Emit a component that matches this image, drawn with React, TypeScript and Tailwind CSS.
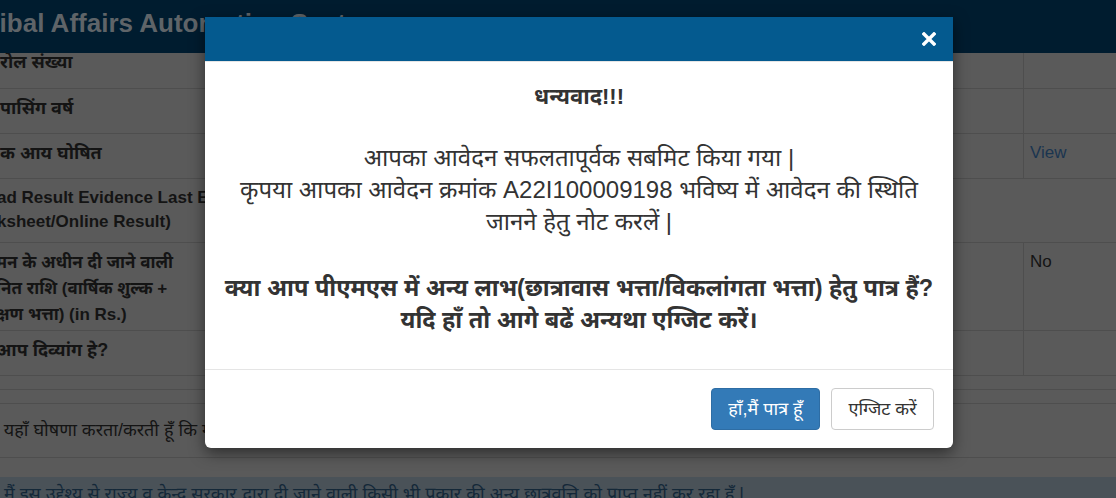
import React from 'react';

const FONT = "font-['Liberation_Sans','Noto_Sans_Devanagari','Noto_Sans',sans-serif]";

const Row: React.FC<{ h: string; label?: React.ReactNode; right?: React.ReactNode; span?: boolean; bold?: boolean }> = ({ h, label, right, span, bold = true }) => (
  <div className={`grid grid-cols-[400px_623px_93px] border-b border-[#4e4e4e] ${h}`}>
    <div className={`pt-[7px] pl-0 text-[17px] leading-[24px] text-[#141414] ${bold ? 'font-bold' : ''}`}>{label}</div>
    {span ? (
      <div className="col-span-2" />
    ) : (
      <>
        <div />
        <div className="border-l border-[#4e4e4e] pt-[7px] pl-[6px] text-[17px] leading-[24px]">{right}</div>
      </>
    )}
  </div>
);

const App: React.FC = () => {
  return (
    <div className={`relative h-[498px] w-[1116px] overflow-hidden bg-[#5a5a5a] ${FONT}`}>
      {/* page header (fixed, page is scrolled under it) */}
      <div className="relative z-10 h-[53px] overflow-hidden bg-[#001c2f]">
        <div className="ml-[-25px] whitespace-nowrap pt-[5px] text-[26px] font-bold leading-[36px] text-[#5f6468]">
          Tribal Affairs Automation System
        </div>
      </div>

      {/* dimmed form table */}
      <div className="-mt-[10px]">
        <Row h="h-[46px]" label={<span className="text-[18px]">रोल संख्या</span>} />
        <Row h="h-[45px]" label={<span className="text-[18px]">पासिंग वर्ष</span>} />
        <Row h="h-[45px]" label={<span className="text-[18px]">क आय घोषित</span>} right={<span className="text-[#1a3550]">View</span>} />
        <Row
          h="h-[64px]"
          span
          label={
            <>
              <div className="ml-[-3px] whitespace-nowrap">ad Result Evidence Last Exam</div>
              <div className="ml-[-3px] whitespace-nowrap">ksheet/Online Result)</div>
            </>
          }
        />
        <Row
          h="h-[88px]"
          label={
            <div className="leading-[26px]">
              <div className="ml-[-4px] whitespace-nowrap">मन के अधीन दी जाने वाली</div>
              <div className="ml-[-4px] whitespace-nowrap">नित राशि (वार्षिक शुल्क +</div>
              <div className="ml-[-4px] whitespace-nowrap">क्षण भत्ता) (in Rs.)</div>
            </div>
          }
          right={<span className="text-[#141414]">No</span>}
        />
        <Row h="h-[45px]" label={<span className="ml-[-4px] inline-block text-[18px]">आप दिव्यांग हे?</span>} />
        <div className="h-[14px] border-b border-[#4e4e4e]" />
        <div className="h-[14px] border-b border-[#4e4e4e]" />
        <div className="flex h-[54px] items-center overflow-hidden border-b border-[#4e4e4e] text-[18px] text-[#141414]">
          <span className="ml-[-12px] whitespace-nowrap">मैं यहाँ घोषणा करता/करती हूँ कि मेरे द्वारा दी गई जानकारी सत्य है</span>
        </div>
        <div className="h-[19px]" />
        <div className="h-[40px] bg-[#4a5258] pl-[4px] pt-[4px] text-[18px] leading-[26px] text-[#142838] whitespace-nowrap">
          मैं इस उद्देश्य से राज्य व केन्द्र सरकार द्वारा दी जाने वाली किसी भी प्रकार की अन्य छात्रवृत्ति को प्राप्त नहीं कर रहा हूँ |
        </div>
      </div>

      {/* modal */}
      <div className="absolute left-[205px] top-[17px] z-20 w-[748px] overflow-hidden rounded-b-[6px] bg-white shadow-[0_5px_15px_rgba(0,0,0,0.5)]">
        <div className="flex h-[45px] items-center justify-end border-b border-[#e5e5e5] bg-[#045a8f] pr-[16px]">
          <button className="flex h-[16px] w-[16px] items-center justify-center">
            <svg width="14" height="14" viewBox="0 0 14 14">
              <path d="M2 2 L12 12 M12 2 L2 12" stroke="#fff" strokeWidth="3.4" strokeLinecap="square" />
            </svg>
          </button>
        </div>
        <div className="px-[15px] pb-[33px] pt-[19px] text-center text-[24px] leading-[32px] text-[#333]">
          <div className="text-[22px] font-bold">धन्यवाद!!!</div>
          <div className="h-[29px]" />
          <div>आपका आवेदन सफलतापूर्वक सबमिट किया गया |</div>
          <div>
            कृपया आपका आवेदन क्रमांक A22I100009198 भविष्य में आवेदन की स्थिति
            <br />
            जानने हेतु नोट करलें |
          </div>
          <div className="h-[34px]" />
          <div className="text-[23.5px] font-bold">
            क्या आप पीएमएस में अन्य लाभ(छात्रावास भत्ता/विकलांगता भत्ता) हेतु पात्र हैं?
            <br />
            यदि हाँ तो आगे बढें अन्यथा एग्जिट करें।
          </div>
        </div>
        <div className="flex justify-end gap-[11px] border-t border-[#e5e5e5] px-[19px] pb-[18px] pt-[18px]">
          <button className="h-[42px] w-[109px] rounded-[4px] border border-[#2e6da4] bg-[#337ab7] text-[18px] text-white">
            हाँ,मैं पात्र हूँ
          </button>
          <button className="h-[42px] w-[103px] rounded-[4px] border border-[#ccc] bg-white text-[18px] text-[#333]">
            एग्जिट करें
          </button>
        </div>
      </div>
    </div>
  );
};

export default App;
